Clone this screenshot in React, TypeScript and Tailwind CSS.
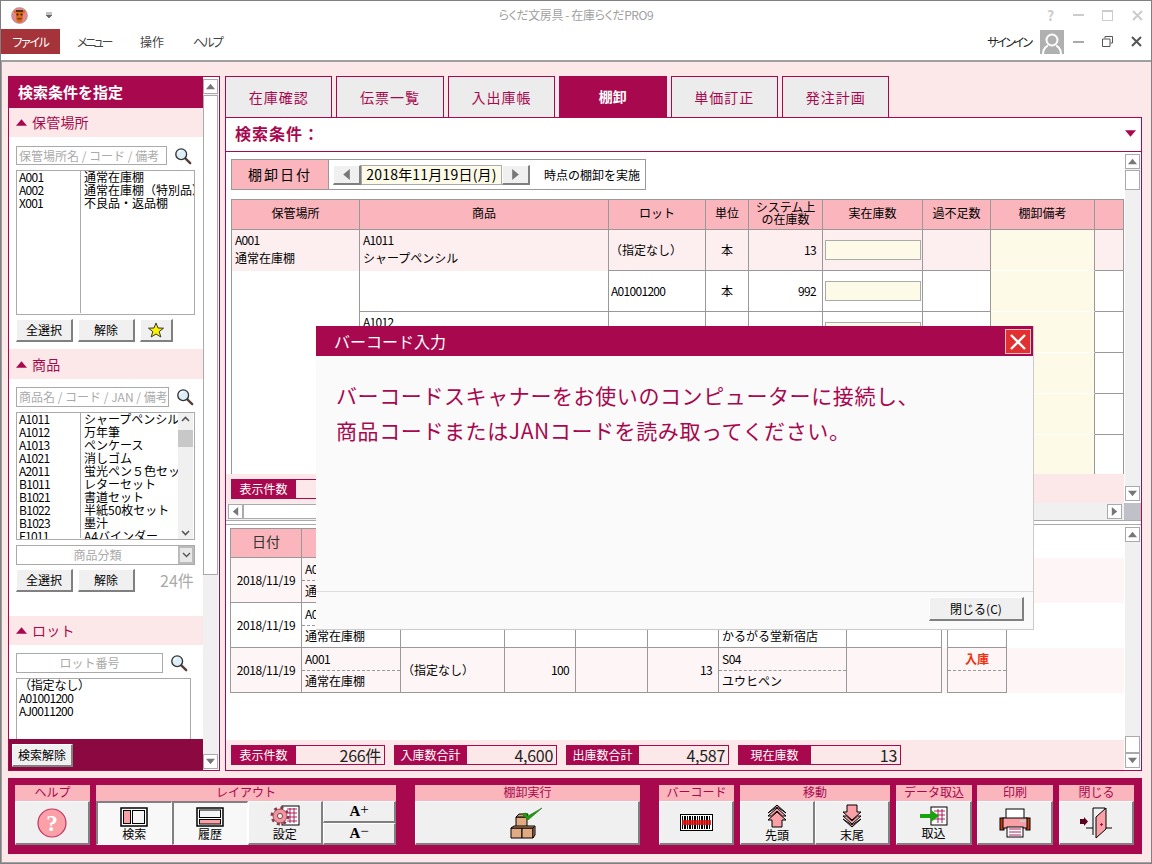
import React from 'react';

const bevel = 'bg-[#f0f0f0] border-t border-l border-t-white border-l-white border-r-2 border-b-2 border-r-[#808080] border-b-[#808080]';

const Triangle = ({ dir, size = 9, color = '#777' }: { dir: 'up' | 'down' | 'left' | 'right'; size?: number; color?: string }) => {
  const pts = { up: '5,2 10,8 0,8', down: '0,2 10,2 5,8', left: '8,0 8,10 2,5', right: '2,0 2,10 8,5' }[dir];
  return (
    <svg width={size} height={size} viewBox="0 0 10 10" className="block">
      <polygon points={pts} fill={color} />
    </svg>
  );
};

const ArrowBtn = ({ dir }: { dir: 'up' | 'down' | 'left' | 'right' }) => (
  <div className="w-[15px] h-[15px] shrink-0 bg-white border border-[#aaa] flex items-center justify-center">
    <Triangle dir={dir} />
  </div>
);

const VScroll = ({ thumbTop, thumbH }: { thumbTop: number; thumbH: number }) => (
  <div className="w-[15px] h-full flex flex-col justify-between bg-[#f0f0f0] relative">
    <ArrowBtn dir="up" />
    <div className="absolute left-0 w-[15px] bg-white border border-[#aaa]" style={{ top: thumbTop, height: thumbH }} />
    <ArrowBtn dir="down" />
  </div>
);

const SearchIcon = () => (
  <svg width="18" height="18" viewBox="0 0 20 20" className="shrink-0">
    <line x1="12" y1="12" x2="18" y2="18" stroke="#5a3a3a" strokeWidth="2.6" strokeLinecap="round" />
    <circle cx="8" cy="8" r="6" fill="#dceefa" stroke="#333" strokeWidth="1.5" />
    <path d="M4.5 7 a4 4 0 0 1 3.5 -3" stroke="#fff" strokeWidth="1.4" fill="none" />
  </svg>
);

const StarIcon = () => (
  <svg width="16" height="16" viewBox="0 0 16 16">
    <polygon points="8,1 10,6 15.5,6.2 11.2,9.6 12.8,15 8,12 3.2,15 4.8,9.6 .5,6.2 6,6" fill="#fdf000" stroke="#333" strokeWidth="1" />
  </svg>
);

const Logo = () => (
  <svg width="17" height="17" viewBox="0 0 17 17">
    <circle cx="8.5" cy="8.5" r="8" fill="#e2858c" stroke="#999" strokeWidth="0.6" />
    <path d="M3 3.5h11v2l-2 1v5.5l-1.5 3.5h-4L5 12V6.5l-2-1z" fill="#d9691a" />
    <rect x="5" y="3" width="7" height="2" fill="#5b2c10" />
    <circle cx="6.5" cy="7.5" r="1" fill="#2a1606" />
    <circle cx="10.5" cy="7.5" r="1" fill="#2a1606" />
    <rect x="6.5" y="11" width="4" height="1.4" fill="#6a3510" />
  </svg>
);

const XIcon = ({ color }: { color: string }) => (
  <svg width="11" height="11" viewBox="0 0 11 11">
    <path d="M1 1l9 9M10 1l-9 9" stroke={color} strokeWidth="2" />
  </svg>
);

const ListBox = ({ rows, className, scroll }: { rows: [string, string][]; className: string; scroll?: boolean }) => (
  <div className={`ml-[7px] border border-[#aaa] bg-white overflow-hidden relative text-[12px] leading-[13px] text-black ${className}`}>
    <div className="-mt-[1px]">
      {rows.map(([code, name]) => (
        <div key={code} className="flex h-[13px] whitespace-nowrap">
          <div className="w-[64px] pl-[2px] tracking-[-0.7px] shrink-0">{code}</div>
          <div className="pl-[3px] overflow-hidden flex-1">{name}</div>
        </div>
      ))}
    </div>
    <div className="absolute left-[63px] top-0 bottom-[1px] w-px bg-[#aaa]" />
    {scroll && (
      <div className="absolute right-[1px] top-0 bottom-0 w-[15px] bg-[#f0f0f0] flex flex-col justify-between items-center pt-[3px]">
        <svg width="9" height="6" viewBox="0 0 9 6"><path d="M1 5l3.5-3.5L8 5" stroke="#555" strokeWidth="1.6" fill="none" /></svg>
        <div className="absolute top-[17px] left-0 w-[15px] h-[17px] bg-[#c8c8c8]" />
        <svg width="9" height="6" viewBox="0 0 9 6" className="mb-[3px]"><path d="M1 1l3.5 3.5L8 1" stroke="#555" strokeWidth="1.6" fill="none" /></svg>
      </div>
    )}
  </div>
);

const SectionHead = ({ label, h }: { label: string; h: string }) => (
  <div className={`${h} bg-[#fde8e9] flex items-center pl-[7px] gap-[5px] text-[14px] text-[#a8084e]`}>
    <Triangle dir="up" size={11} color="#a8084e" />
    <span className="tracking-[0.2px]">{label}</span>
  </div>
);

const SmallBtn = ({ children, w }: { children: React.ReactNode; w: string }) => (
  <button className={`${w} h-[23px] ${bevel} flex items-center justify-center text-[12px] text-black`}>{children}</button>
);

const Filter = ({ text, w, h = 'h-[20px]', center }: { text: string; w: string; h?: string; center?: boolean }) => (
  <div className={`flex items-center ml-[7px] gap-[7px] ${h}`}>
    <div className={`${w} ${h} border border-[#aaa] flex items-center overflow-hidden whitespace-nowrap text-[12px] text-[#aaa] px-[2px] ${center ? 'justify-center' : ''}`}>{text}</div>
    <SearchIcon />
  </div>
);

const SidePanel = () => (
  <aside className="w-[212px] h-[695px] shrink-0 border border-[#a8084e] bg-white flex">
    <div className="w-[194px] flex flex-col overflow-hidden">
      <div className="h-[31px] shrink-0 bg-[#a8084e] text-white font-bold text-[15px] flex items-center pl-[9px]">検索条件を指定</div>
      <SectionHead label="保管場所" h="h-[29px] shrink-0" />
      <div className="mt-[9px]"><Filter text="保管場所名 / コード / 備考" w="w-[151px]" h="h-[19px]" /></div>
      <ListBox
        className="mt-[5px] h-[145px] w-[179px] shrink-0"
        rows={[['A001', '通常在庫棚'], ['A002', '通常在庫棚（特別品）'], ['X001', '不良品・返品棚']]}
      />
      <div className="flex ml-[7px] gap-[5px] mt-[4px]">
        <SmallBtn w="w-[57px]">全選択</SmallBtn>
        <SmallBtn w="w-[57px]">解除</SmallBtn>
        <SmallBtn w="w-[33px]"><StarIcon /></SmallBtn>
      </div>
      <div className="mt-[7px]"><SectionHead label="商品" h="h-[30px]" /></div>
      <div className="mt-[8px]"><Filter text="商品名 / コード / JAN / 備考" w="w-[153px]" /></div>
      <ListBox
        className="mt-[5px] h-[128px] w-[179px] shrink-0"
        scroll
        rows={[
          ['A1011', 'シャープペンシル'], ['A1012', '万年筆'], ['A1013', 'ペンケース'], ['A1021', '消しゴム'],
          ['A2011', '蛍光ペン５色セット'], ['B1011', 'レターセット'], ['B1021', '書道セット'], ['B1022', '半紙50枚セット'],
          ['B1023', '墨汁'], ['F1011', 'A4バインダー'],
        ]}
      />
      <div className="ml-[7px] mt-[5px] w-[179px] h-[20px] shrink-0 border border-[#aaa] flex items-center text-[12px] text-[#aaa] relative">
        <span className="flex-1 text-center pr-[16px]">商品分類</span>
        <div className="absolute right-0 top-0 bottom-0 w-[16px] bg-[#e8e8e8] border-2 border-[#bbb] flex items-center justify-center">
          <svg width="9" height="6" viewBox="0 0 9 6"><path d="M1 1l3.5 3.5L8 1" stroke="#555" strokeWidth="1.4" fill="none" /></svg>
        </div>
      </div>
      <div className="flex ml-[7px] gap-[5px] mt-[4px] items-center">
        <SmallBtn w="w-[57px]">全選択</SmallBtn>
        <SmallBtn w="w-[57px]">解除</SmallBtn>
        <span className="ml-[20px] mb-[2px] text-[16px] text-[#aaa] leading-none">24件</span>
      </div>
      <div className="mt-[24px]"><SectionHead label="ロット" h="h-[29px]" /></div>
      <div className="mt-[8px]"><Filter text="ロット番号" w="w-[147px]" center /></div>
      <div className="flex-1 min-h-0 mt-[5px] overflow-hidden">
        <div className="ml-[7px] w-[175px] h-[80px] border border-[#aaa] text-[12px] leading-[13px] pl-[2px] tracking-[-0.2px]">
          <div className="-mt-[1px]">（指定なし）</div>
          <div className="tracking-[-0.7px]">A01001200</div>
          <div className="tracking-[-0.7px]">AJ0011200</div>
        </div>
      </div>
      <div className="h-[31px] shrink-0 bg-[#8c0840] flex items-end pl-[3px] pb-[3px]">
        <SmallBtn w="w-[61px]">検索解除</SmallBtn>
      </div>
    </div>
    <div className="pt-[2px] pb-[1px] w-[16px]">
      <VScroll thumbTop={16} thumbH={480} />
    </div>
  </aside>
);

const tabs = ['在庫確認', '伝票一覧', '入出庫帳', '棚卸', '単価訂正', '発注計画'];

const Tabs = () => (
  <div className="flex h-[41px] shrink-0 gap-[4px]">
    {tabs.map((t) =>
      t === '棚卸' ? (
        <div key={t} className="w-[107.4px] bg-[#a8084e] text-white font-bold text-[14px] flex items-center justify-center">{t}</div>
      ) : (
        <div key={t} className="w-[107.4px] bg-[#ececec] border border-[#a8084e] border-b-0 text-[#a8084e] text-[14px] tracking-[1px] flex items-center justify-center">{t}</div>
      )
    )}
  </div>
);

const upperHeads = ['保管場所', '商品', 'ロット', '単位', 'システム上の在庫数', '実在庫数', '過不足数', '棚卸備考', ''];
const stockRows = [
  { lot: '（指定なし）', unit: '本', qty: '13' },
  { lot: 'A01001200', unit: '本', qty: '992' },
  { lot: '', unit: '', qty: '' },
  { lot: '', unit: '', qty: '' },
  { lot: '', unit: '', qty: '' },
  { lot: '', unit: '', qty: '' },
];
const cell = 'border-r border-b border-[#999]';

const UpperTable = () => (
  <div className="grid grid-cols-[128px_249px_97px_43px_74px_100px_68px_104px_29px] grid-rows-[30px_41px_41px_41px_41px_41px_41px] border-t border-l border-[#999] text-[12px] text-black">
    {upperHeads.map((h, i) => (
      <div key={i} className={`${cell} bg-[#fab5bd] flex items-center justify-center text-center pb-[3px] ${i === 4 ? 'leading-[12px] px-[4px]' : ''}`}>{h}</div>
    ))}
    <div className={`${cell} row-span-6`}>
      <div className="h-[41px] bg-[#fdeeef] pl-[3px] pt-[1px] leading-[18px]">
        <div className="tracking-[-0.7px]">A001</div>
        <div>通常在庫棚</div>
      </div>
    </div>
    <div className={`${cell} row-span-2`}>
      <div className="h-[41px] bg-[#fdeeef] pl-[3px] pt-[1px] leading-[18px]">
        <div className="tracking-[-0.7px]">A1011</div>
        <div>シャープペンシル</div>
      </div>
    </div>
    {stockRows.map((r, i) => (
      <React.Fragment key={i}>
        {i === 2 && (
          <div className={`${cell} row-span-2 pl-[3px] pt-[1px] leading-[18px]`}>
            <div className="tracking-[-0.7px]">A1012</div>
          </div>
        )}
        {i === 4 && <div className={`${cell} row-span-2`} />}
        <div className={`${cell} flex items-center pl-[1px] ${i === 0 ? 'bg-[#fdeeef]' : ''} ${i === 1 ? 'pl-[2px] tracking-[-0.7px]' : ''}`}>{r.lot}</div>
        <div className={`${cell} flex items-center justify-center ${i === 0 ? 'bg-[#fdeeef]' : ''}`}>{r.unit}</div>
        <div className={`${cell} flex items-center justify-end pr-[6px] tracking-[-0.7px] ${i === 0 ? 'bg-[#fdeeef]' : ''}`}>{r.qty}</div>
        <div className={`${cell} flex items-center justify-center ${i === 0 ? 'bg-[#fdeeef]' : ''}`}>
          <div className="w-[96px] h-[20px] bg-[#fdfae8] border border-[#aaa]" />
        </div>
        <div className={`${cell} ${i === 0 ? 'bg-[#fdeeef]' : ''}`} />
        <div className="border-r border-[#999] border-b border-b-white bg-[#fdfae8]" />
        <div className={`${cell} ${i === 0 ? 'bg-[#fdeeef]' : ''}`} />
      </React.Fragment>
    ))}
  </div>
);

const Stat = ({ label, value, labelW, valueW }: { label: string; value?: string; labelW: string; valueW: string }) => (
  <div className="flex h-[20px] shrink-0">
    <div className={`${labelW} bg-[#a8084e] text-white text-[12px] flex items-center justify-center`}>{label}</div>
    <div className={`${valueW} border border-l-0 border-[#a8084e] bg-[#fde8e9] text-[16px] leading-none text-[#222] flex items-center justify-end pr-[3px] tracking-[-0.3px]`}>{value}</div>
  </div>
);

const historyRows = [
  { bg: 'bg-[#fdf5f6]', lot: '（指定なし）', in: '', stock: '', code: 'S01', name: 'かるがる堂', kind: '出庫' },
  { bg: 'bg-white', lot: 'A01001200', in: '', stock: '', code: 'T01', name: 'かるがる堂新宿店', kind: '' },
  { bg: 'bg-[#fdf5f6]', lot: '（指定なし）', in: '100', stock: '13', code: 'S04', name: 'ユウヒペン', kind: '入庫' },
];

const TwoLine = ({ top, bottom, className = '' }: { top: React.ReactNode; bottom?: React.ReactNode; className?: string }) => (
  <div className={`flex flex-col ${className}`}>
    <div className="flex-1 border-b border-dashed border-[#999] flex items-center pl-[3px] tracking-[-0.5px]">{top}</div>
    <div className="flex-1 flex items-center pl-[3px]">{bottom}</div>
  </div>
);

const HistoryTable = () => (
  <div className="text-[12px] text-black w-[894px]">
    <div className="grid grid-cols-[71px_99px_104px_71px_72px_71px_128px_95px] h-[30px] border-t border-l border-[#999] w-[712px]">
      {['日付', '', '', '', '', '', '', ''].map((h, i) => (
        <div key={i} className={`${cell} bg-[#fab5bd] flex items-center justify-center pb-[3px] text-[14px] text-[#333]`}>{h}</div>
      ))}
    </div>
    {historyRows.map((r, i) => (
      <div key={i} className={`grid grid-cols-[71px_99px_104px_71px_72px_71px_128px_95px_5px_60px_117px] border-l border-[#999] h-[45px] ${r.bg}`}>
        <div className={`${cell} flex items-center justify-center tracking-[-0.4px]`}>2018/11/19</div>
        <TwoLine className={cell} top="A001" bottom="通常在庫棚" />
        <div className={`${cell} flex items-center pl-[1px]`}>{r.lot}</div>
        <div className={`${cell} flex items-center justify-end pr-[6px] tracking-[-0.7px]`}>{r.in}</div>
        <div className={cell} />
        <div className={`${cell} flex items-center justify-end pr-[6px] tracking-[-0.7px]`}>{r.stock}</div>
        <TwoLine className={cell} top={r.code} bottom={r.name} />
        <div className={cell} />
        <div />
        <div className={`${cell} border-l flex flex-col`}>
          <div className="flex-1 border-b border-dashed border-[#999] flex items-center justify-center text-[#f03010] font-bold">{r.kind}</div>
          <div className="flex-1" />
        </div>
        <div />
      </div>
    ))}
  </div>
);

const MainPanel = () => (
  <section className="w-[917px] h-[695px] shrink-0 flex flex-col">
    <Tabs />
    <div className="flex-1 min-h-0 border border-[#a8084e] bg-white flex flex-col">
      <div className="h-[34px] shrink-0 border-b border-[#a8084e] flex items-center justify-between pb-[3px] pl-[9px] pr-[5px] text-[16px] font-bold text-[#a8084e]">
        <span className="tracking-[1px]">検索条件：</span>
        <Triangle dir="down" size={11} color="#a8084e" />
      </div>

      <div className="h-[351px] shrink-0 flex">
        <div className="w-[898px] flex flex-col">
          <div className="mt-[7px] ml-[5px] w-[415px] h-[31px] shrink-0 border border-[#999] flex items-center text-[12px] bg-white">
            <div className="w-[97px] h-full bg-[#fab5bd] border-r border-[#999] flex items-center justify-center text-[14px] tracking-[2px]">棚卸日付</div>
            <div className={`ml-[4px] w-[28px] h-[20px] ${bevel} flex items-center justify-center`}><Triangle dir="left" size={11} /></div>
            <div className="w-[141px] h-[20px] bg-[#fdfae8] border border-[#aaa] flex items-center justify-center text-[14px] whitespace-nowrap tracking-[0.2px]">2018年11月19日(月)</div>
            <div className={`w-[28px] h-[20px] ${bevel} flex items-center justify-center`}><Triangle dir="right" size={11} /></div>
            <span className="ml-[14px] whitespace-nowrap">時点の棚卸を実施</span>
          </div>
          <div className="mt-[9px] ml-[5px] flex-1 min-h-0 overflow-hidden">
            <UpperTable />
          </div>
          <div className="h-[29px] shrink-0 bg-[#fde8e9] flex items-center pl-[5px]">
            <Stat label="表示件数" labelW="w-[65px]" valueW="w-[89px]" />
          </div>
        </div>
        <div className="ml-[1px] pt-[2px] pb-[2px] h-full">
          <VScroll thumbTop={16} thumbH={20} />
        </div>
      </div>

      <div className="h-[17px] shrink-0 flex">
        <div className="w-[898px] flex items-center bg-[#f0f0f0] pl-[2px] pr-[2px] justify-between">
          <div className="flex flex-1">
            <ArrowBtn dir="left" />
            <div className="w-[400px] h-[15px] bg-white border border-[#aaa]" />
          </div>
          <ArrowBtn dir="right" />
        </div>
        <div className="flex-1 bg-[#c0c0c8]" />
      </div>
      <div className="h-[5px] shrink-0 border-t border-b border-[#aaa] bg-white" />

      <div className="flex-1 min-h-0 flex">
        <div className="w-[898px] flex flex-col bg-white">
          <div className="flex-1 min-h-0 pt-[3px] pl-[4px]">
            <HistoryTable />
          </div>
          <div className="h-[30px] shrink-0 bg-[#fde8e9] flex items-center pl-[5px] gap-[9px]">
            <Stat label="表示件数" value="266件" labelW="w-[65px]" valueW="w-[89px]" />
            <Stat label="入庫数合計" value="4,600" labelW="w-[73px]" valueW="w-[90px]" />
            <Stat label="出庫数合計" value="4,587" labelW="w-[73px]" valueW="w-[90px]" />
            <Stat label="現在庫数" value="13" labelW="w-[73px]" valueW="w-[90px]" />
          </div>
        </div>
        <div className="ml-[1px] pt-[2px] pb-[2px] h-full">
          <VScroll thumbTop={209} thumbH={17} />
        </div>
      </div>
    </div>
  </section>
);

const ToolGroup = ({ title, w, className = '', children }: { title: string; w: string; className?: string; children: React.ReactNode }) => (
  <div className={`${w} shrink-0 flex flex-col ${className}`}>
    <div className="h-[16px] bg-[#fab5bd] text-[#a8084e] text-[12px] leading-[14px] text-center">{title}</div>
    <div className="h-[44px] flex">{children}</div>
  </div>
);

const ToolBtn = ({ label, children, sunken }: { label?: string; children: React.ReactNode; sunken?: boolean }) => (
  <button
    className={`flex-1 min-w-0 h-full flex flex-col items-center justify-center text-[12px] leading-[13px] text-black ${
      sunken ? 'bg-[#f8f8f8] border-t-2 border-l-2 border-t-[#808080] border-l-[#808080] border-r border-b border-r-white border-b-white' : bevel
    }`}
  >
    {children}
    {label && <span>{label}</span>}
  </button>
);

const IconHelp = () => (
  <svg width="30" height="30" viewBox="0 0 30 30">
    <circle cx="15" cy="15" r="14" fill="#fba0a6" stroke="#c0336a" strokeWidth="1.2" />
    <text x="15" y="23" textAnchor="middle" fontSize="23" fontWeight="bold" fill="#fff" fontFamily="Liberation Serif, serif">?</text>
  </svg>
);

const IconLayoutLeft = () => (
  <svg width="28" height="20" viewBox="0 0 28 20">
    <rect x="1" y="1" width="26" height="18" fill="#fff" stroke="#000" strokeWidth="1.5" />
    <rect x="3.5" y="3.5" width="7" height="13" fill="#fba0a6" stroke="#000" />
    <rect x="12.5" y="3.5" width="12" height="13" fill="#f5f5f5" stroke="#000" />
  </svg>
);

const IconLayoutBottom = () => (
  <svg width="28" height="20" viewBox="0 0 28 20">
    <rect x="1" y="1" width="26" height="18" fill="#fff" stroke="#000" strokeWidth="1.5" />
    <rect x="3.5" y="3" width="21" height="7.5" fill="#f5f5f5" stroke="#000" />
    <rect x="3.5" y="12.5" width="21" height="4.5" fill="#fba0a6" stroke="#000" />
  </svg>
);

const IconSettings = () => (
  <svg width="30" height="22" viewBox="0 0 30 22">
    <rect x="12" y="1" width="17" height="19" fill="#fff" stroke="#000" />
    <path d="M17 4h10M17 8h10M17 12h10M17 16h10M20 3v15M24 3v15" stroke="#a8084e" strokeWidth="0.9" />
    <circle cx="10" cy="11" r="8" fill="none" stroke="#8a3a4a" strokeWidth="3" strokeDasharray="3 3.3" />
    <circle cx="10" cy="11" r="7" fill="#f0969c" stroke="#8a3a4a" strokeWidth="0.8" />
    <circle cx="10" cy="11" r="2.6" fill="#eee" stroke="#6a2a3a" strokeWidth="0.8" />
  </svg>
);

const IconBoxes = () => (
  <svg width="34" height="32" viewBox="0 0 34 32">
    <g fill="#e2aa80" stroke="#000" strokeWidth="1">
      <path d="M6 10h11v10H6z" />
      <path d="M6 10l3-3h9l-1 3z" fill="#d29a70" />
      <path d="M1 21h11v10H1z" />
      <path d="M12 21h11v10H12z" />
      <path d="M23 21l2-2v9l-2 3z" fill="#d29a70" />
      <path d="M1 21l3-2h21l-2 2z" fill="#d29a70" />
    </g>
    <path d="M12 7l6 6L32 1 18 9l-2-3z" fill="#1f9a10" stroke="#156f0c" strokeWidth="0.6" />
  </svg>
);

const IconBarcode = () => {
  const bars = [2, 4, 5, 7, 9, 10, 12, 14, 15, 17, 19, 21, 22, 24, 26, 27, 29];
  return (
    <svg width="33" height="17" viewBox="0 0 33 17">
      <rect x="0.5" y="0.5" width="32" height="16" fill="#fff" stroke="#000" />
      {bars.map((x) => <rect key={x} x={x} y="2" width="1" height="13" fill="#000" />)}
      <rect x="2" y="6" width="29" height="5" fill="#e01010" opacity="0.85" />
    </svg>
  );
};

const IconUp = () => (
  <svg width="20" height="24" viewBox="0 0 20 24">
    <path d="M10 1L19 9 10 3 1 9z" fill="#fba0a6" stroke="#000" />
    <path d="M10 4L19 12h-3.5L10 7 4.500 12H1z" fill="#fba0a6" stroke="#000" />
    <path d="M10 8L19 16h-4v7H5v-7H1z" fill="#fba0a6" stroke="#000" />
  </svg>
);

const IconDown = () => (
  <svg width="20" height="24" viewBox="0 0 20 24">
    <path d="M10 23L19 15 10 21 1 15z" fill="#fba0a6" stroke="#000" />
    <path d="M10 20L19 12h-3.5L10 17 4.500 12H1z" fill="#fba0a6" stroke="#000" />
    <path d="M10 16L19 8h-4V1H5v7H1z" fill="#fba0a6" stroke="#000" />
  </svg>
);

const IconImport = () => (
  <svg width="30" height="20" viewBox="0 0 30 20">
    <rect x="12" y="1" width="16" height="18" fill="#fff" stroke="#000" />
    <path d="M15 5h11M15 9h11M15 13h11M19 3v14M23 3v14" stroke="#a8084e" strokeWidth="0.9" />
    <path d="M1 8h11V4l8 6-8 6v-4H1z" fill="#16a30c" />
  </svg>
);

const IconPrinter = () => (
  <svg width="32" height="30" viewBox="0 0 32 30">
    <rect x="7" y="1" width="18" height="11" fill="#fff" stroke="#000" />
    <rect x="1" y="10" width="4" height="12" fill="#c83c10" stroke="#000" />
    <rect x="27" y="10" width="4" height="12" fill="#c83c10" stroke="#000" />
    <rect x="4" y="10" width="24" height="10" fill="#f8a0a6" stroke="#000" />
    <rect x="21" y="12" width="6" height="2" fill="#ccc" />
    <rect x="8" y="19" width="16" height="10" fill="#fff" stroke="#000" />
    <path d="M10 21h12M10 24h12M10 27h12" stroke="#a8084e" strokeWidth="0.9" />
  </svg>
);

const IconDoor = () => (
  <svg width="32" height="32" viewBox="0 0 32 32">
    <rect x="0" y="12" width="4" height="5" fill="#5a0020" />
    <path d="M4 10l4 4.500-4 4.500z" fill="#5a0020" />
    <path d="M13 28V1h12v2" fill="none" stroke="#000" />
    <path d="M6 21h7M25 21h7" stroke="#000" />
    <path d="M16 10L26 1v21L16 31z" fill="#fba0a6" stroke="#000" />
    <path d="M20 17.500h3M21.500 16v3" stroke="#a8084e" />
  </svg>
);

const Toolbar = () => (
  <footer className="mt-[7px] w-[1134px] h-[76px] shrink-0 bg-[#a8084e] flex pt-[7px] pl-[7px]">
    <ToolGroup title="ヘルプ" w="w-[75px]"><ToolBtn><IconHelp /></ToolBtn></ToolGroup>
    <ToolGroup title="レイアウト" w="w-[300px]" className="ml-[6px]">
      <ToolBtn sunken label="検索"><IconLayoutLeft /></ToolBtn>
      <ToolBtn sunken label="履歴"><IconLayoutBottom /></ToolBtn>
      <ToolBtn label="設定"><IconSettings /></ToolBtn>
      <div className="flex-1 min-w-0 flex flex-col h-[44px]">
        <div className={`h-[22px] overflow-hidden ${bevel} flex items-center justify-center font-['Liberation_Serif',serif] font-bold text-[15px] leading-none`}>A<span className="font-normal mb-[5px]">+</span></div>
        <div className={`h-[22px] overflow-hidden ${bevel} flex items-center justify-center font-['Liberation_Serif',serif] font-bold text-[15px] leading-none`}>A<span className="font-normal mb-[5px]">−</span></div>
      </div>
    </ToolGroup>
    <ToolGroup title="棚卸実行" w="w-[225px]" className="ml-[19px]"><ToolBtn><IconBoxes /></ToolBtn></ToolGroup>
    <ToolGroup title="バーコード" w="w-[75px]" className="ml-[19px]"><ToolBtn><IconBarcode /></ToolBtn></ToolGroup>
    <ToolGroup title="移動" w="w-[150px]" className="ml-[6px]">
      <ToolBtn label="先頭"><IconUp /></ToolBtn>
      <ToolBtn label="末尾"><IconDown /></ToolBtn>
    </ToolGroup>
    <ToolGroup title="データ取込" w="w-[76px]" className="ml-[6px]"><ToolBtn label="取込"><IconImport /></ToolBtn></ToolGroup>
    <ToolGroup title="印刷" w="w-[76px]" className="ml-[5px]"><ToolBtn><IconPrinter /></ToolBtn></ToolGroup>
    <ToolGroup title="閉じる" w="w-[75px]" className="ml-[6px]"><ToolBtn><IconDoor /></ToolBtn></ToolGroup>
  </footer>
);

const BarcodeDialog = () => (
  <div className="absolute left-[315px] top-[325px] w-[718px] h-[304px] bg-[#fafafa] border-r border-b border-[#ccc] flex flex-col">
    <div className="h-[30px] shrink-0 bg-[#a8084e] text-white text-[16px] flex items-center pl-[18px] relative">
      バーコード入力
      <div className="absolute left-[689px] top-[3px] w-[26px] h-[25px] bg-[#e23030] border border-[#f6c0c0] flex items-center justify-center">
        <svg width="18" height="18" viewBox="0 0 18 18"><path d="M2 2l14 14M16 2L2 16" stroke="#fff" strokeWidth="2.4" /></svg>
      </div>
    </div>
    <div className="flex-1 pl-[20px] pt-[22px] text-[21px] leading-[35px] text-[#a8084e] whitespace-nowrap tracking-[0.6px]">
      <div>バーコードスキャナーをお使いのコンピューターに接続し、</div>
      <div>商品コードまたはJANコードを読み取ってください。</div>
    </div>
    <div className="h-[38px] shrink-0 border-t border-[#ddd] flex justify-end items-start pt-[5px] pr-[9px]">
      <button className={`w-[95px] h-[24px] ${bevel} text-[12px] flex items-center justify-center`}>閉じる(C)</button>
    </div>
  </div>
);

const TitleBar = () => (
  <header className="h-[61px] shrink-0 bg-white border-b-2 border-[#a0a0a0] [font-feature-settings:'palt']">
    <div className="h-[28px] flex items-center justify-between relative">
      <div className="flex items-center">
        <div className="ml-[10px]"><Logo /></div>
        <svg width="8" height="8" viewBox="0 0 8 8" className="ml-[17px]"><path d="M1 2h6M1 4h6l-3 3z" stroke="#666" fill="#666" strokeWidth="0.8" /></svg>
      </div>
      <div className="absolute inset-x-0 text-center text-[12px] text-[#a0a0a0] tracking-[-0.4px]">らくだ文房具 - 在庫らくだPRO9</div>
      <div className="flex items-center w-[110px] justify-between pr-[8px] pl-[6px] text-[#ccc]">
        <span className="font-bold text-[14px] leading-none">?</span>
        <div className="w-[11px] h-[2px] bg-[#ccc]" />
        <div className="w-[11px] h-[11px] border border-[#ccc] border-t-2" />
        <XIcon color="#ccc" />
      </div>
    </div>
    <div className="h-[25px] flex items-center text-[12px] text-[#444]">
      <div className="w-[59px] h-full bg-[#a4343a] text-white flex items-center justify-center tracking-[-1.4px]">ファイル</div>
      <span className="ml-[17px] tracking-[-2.4px]">メニュー</span>
      <span className="ml-[29px]">操作</span>
      <span className="ml-[29px] tracking-[-1.8px]">ヘルプ</span>
      <div className="ml-auto flex items-center h-full">
        <span className="text-[#222] tracking-[-2px]">サインイン</span>
        <div className="ml-[9px] w-[24px] h-[24px] bg-[#b0b0b0] overflow-hidden">
          <svg width="24" height="24" viewBox="0 0 24 24">
            <circle cx="12" cy="10" r="5.500" fill="none" stroke="#fff" strokeWidth="2" />
            <path d="M3 24c0-6 4-8 5-8M21 24c0-6-4-8-5-8" fill="none" stroke="#fff" strokeWidth="2" />
          </svg>
        </div>
        <div className="ml-[9px] w-[11px] h-[2px] bg-[#aaa]" />
        <svg width="11" height="11" viewBox="0 0 11 11" className="ml-[18px]">
          <path d="M3 2.500V.5h7.500v6.500H8.500M.5 3h7.500v7.500H.5z" fill="none" stroke="#555" />
        </svg>
        <div className="ml-[18px] mr-[9px]"><XIcon color="#555" /></div>
      </div>
    </div>
  </header>
);

export default function App() {
  return (
    <div className="w-[1152px] h-[864px] relative overflow-hidden bg-white border border-[#808080] flex flex-col font-['Noto_Sans_CJK_JP',sans-serif]">
      <TitleBar />
      <div className="flex-1 min-h-0 bg-[#fde8e9] border-l border-b border-[#a0a0a0] pl-[6px] pt-[14px] flex flex-col">
        <div className="flex gap-[5px]">
          <SidePanel />
          <MainPanel />
        </div>
        <Toolbar />
      </div>
      <BarcodeDialog />
    </div>
  );
}
